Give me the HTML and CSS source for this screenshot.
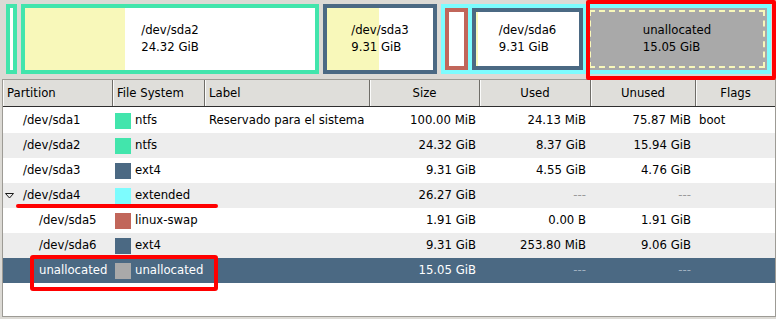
FILE: index.html
```html
<!DOCTYPE html>
<html>
<head>
<meta charset="utf-8">
<title>GParted - /dev/sda</title>
<link rel="stylesheet" href="styles.css">
</head>
<body>

<!-- disk map -->
<div class="map">
  <div class="part ntfs p1"></div>
  <div class="part ntfs p2"><div class="info">/dev/sda2<br>24.32 GiB</div></div>
  <div class="part ext4 p3"><div class="info">/dev/sda3<br>9.31 GiB</div></div>
  <div class="extended">
    <div class="part swap p5"></div>
    <div class="part ext4 p6"><div class="info">/dev/sda6<br>9.31 GiB</div></div>
    <div class="part free"><div class="info">unallocated<br>15.05 GiB</div></div>
  </div>
</div>

<!-- partition list -->
<div class="parts">
  <div class="row head">
    <div class="cell">Partition</div>
    <div class="cell">File System</div>
    <div class="cell">Label</div>
    <div class="cell mid">Size</div>
    <div class="cell mid">Used</div>
    <div class="cell mid">Unused</div>
    <div class="cell mid">Flags</div>
  </div>
  <div class="rows">
    <div class="row">
      <div class="cell name">/dev/sda1</div>
      <div class="cell fs"><span class="swatch c-ntfs"></span>ntfs</div>
      <div class="cell lbl">Reservado para el sistema</div>
      <div class="cell num size">100.00 MiB</div>
      <div class="cell num used">24.13 MiB</div>
      <div class="cell num unused">75.87 MiB</div>
      <div class="cell flags">boot</div>
    </div>
    <div class="row">
      <div class="cell name">/dev/sda2</div>
      <div class="cell fs"><span class="swatch c-ntfs"></span>ntfs</div>
      <div class="cell lbl"></div>
      <div class="cell num size">24.32 GiB</div>
      <div class="cell num used">8.37 GiB</div>
      <div class="cell num unused">15.94 GiB</div>
      <div class="cell flags"></div>
    </div>
    <div class="row">
      <div class="cell name">/dev/sda3</div>
      <div class="cell fs"><span class="swatch c-ext4"></span>ext4</div>
      <div class="cell lbl"></div>
      <div class="cell num size">9.31 GiB</div>
      <div class="cell num used">4.55 GiB</div>
      <div class="cell num unused">4.76 GiB</div>
      <div class="cell flags"></div>
    </div>
    <div class="row">
      <div class="cell name top"><svg class="expander" width="9" height="6" viewBox="0 0 9 6"><polygon points="0.5,0.5 8.5,0.5 4.5,5" fill="none" stroke="#1a1a1a" stroke-width="1"/></svg>/dev/sda4</div>
      <div class="cell fs"><span class="swatch c-ext"></span>extended</div>
      <div class="cell lbl"></div>
      <div class="cell num size">26.27 GiB</div>
      <div class="cell num used dim">---</div>
      <div class="cell num unused dim">---</div>
      <div class="cell flags"></div>
    </div>
    <div class="row">
      <div class="cell name child">/dev/sda5</div>
      <div class="cell fs"><span class="swatch c-swap"></span>linux-swap</div>
      <div class="cell lbl"></div>
      <div class="cell num size">1.91 GiB</div>
      <div class="cell num used">0.00 B</div>
      <div class="cell num unused">1.91 GiB</div>
      <div class="cell flags"></div>
    </div>
    <div class="row">
      <div class="cell name child">/dev/sda6</div>
      <div class="cell fs"><span class="swatch c-ext4"></span>ext4</div>
      <div class="cell lbl"></div>
      <div class="cell num size">9.31 GiB</div>
      <div class="cell num used">253.80 MiB</div>
      <div class="cell num unused">9.06 GiB</div>
      <div class="cell flags"></div>
    </div>
    <div class="row sel">
      <div class="cell name child">unallocated</div>
      <div class="cell fs"><span class="swatch c-free"></span>unallocated</div>
      <div class="cell lbl"></div>
      <div class="cell num size">15.05 GiB</div>
      <div class="cell num used dim">---</div>
      <div class="cell num unused dim">---</div>
      <div class="cell flags"></div>
    </div>
  </div>
</div>

<!-- red marks drawn over the screenshot -->
<div class="mark mark-map"></div>
<div class="mark mark-line"></div>
<div class="mark mark-row"></div>

</body>
</html>
```

FILE: styles.css
```css
body {
	margin: 0;
	background: #dcdad5;
	font-family: "DejaVu Sans", Verdana, sans-serif;
	font-size: 11.7px;
	color: #000;
}

/* disk map */
.map {
	display: flex;
	gap: 4px;
	height: 70px;
	padding: 4px 0 0 6px;
}
.part {
	box-sizing: border-box;
	display: flex;
	align-items: center;
	justify-content: center;
	border: 4px solid #fff;
	background: #fff;
	white-space: nowrap;
	overflow: hidden;
}
.info {
	line-height: 17px;
	text-align: left;
}
.ntfs { border-color: #42e5ac; }
.ext4 { border-color: #4b6983; }
.swap { border-color: #c1665a; }

.p1 { width: 11px; }
.p2 {
	width: 298px;
	background: linear-gradient(to right, #f8f8ba 100px, #fff 100px);
}
.p3 {
	width: 114px;
	background: linear-gradient(to right, #f8f8ba 52px, #fff 52px);
}
.extended {
	display: flex;
	gap: 4px;
	width: 322px;
	border: 4px solid #7dfcfe;
	background: #7dfcfe;
}
.p5 { width: 23px; }
.p6 {
	width: 111px;
	background: linear-gradient(to right, #f8f8ba 2px, #fff 2px);
}
.free {
	width: 180px;
	border: 0;
	background: #a9a9a9;
	outline: 2px dashed #f8f8ba;
	outline-offset: -4px;
}

/* partition list */
.parts {
	height: 236px;
	margin: 5px 0 0 2px;
	border: 1px solid #9d9b95;
	background: #fff;
	overflow: hidden;
}
.row {
	display: grid;
	grid-template-columns: 110px 92px 165px 110px 111px 105px 79px;
	height: 25px;
	line-height: 25px;
}
.head {
	height: 26px;
	line-height: 26px;
	background: #dfdeda;
	border-bottom: 1px solid #2e2e2e;
}
.head .cell {
	padding-left: 4px;
	border-right: 1px solid #6f6d68;
	box-shadow: inset 1px 0 #fbfbfa;
}
.head .cell:last-child { border-right: 0; }
.head .mid {
	padding-left: 0;
	text-align: center;
}
.rows { padding-top: 1px; }
.rows .row:nth-child(even) { background: #ededed; }
.rows .sel,
.rows .sel:nth-child(even) {
	background: #4b6983;
	color: #fff;
}

.cell {
	box-sizing: border-box;
	white-space: nowrap;
	overflow: hidden;
}
.name { padding-left: 20px; }
.name.child { padding-left: 36px; }
.name.top {
	display: flex;
	align-items: center;
	padding-left: 2px;
}
.expander { margin: 0 9px 0 0; }
.fs {
	display: flex;
	align-items: center;
	padding-left: 2px;
}
.swatch {
	width: 16px;
	height: 16px;
	margin-right: 4px;
}
.c-ntfs { background: #42e5ac; }
.c-ext4 { background: #4b6983; }
.c-ext { background: #7dfcfe; }
.c-swap { background: #c1665a; }
.c-free { background: #a9a9a9; }
.lbl { padding-left: 4px; }
.num { text-align: right; }
.size { padding-right: 4px; }
.used { padding-right: 5px; }
.unused { padding-right: 5px; }
.flags { padding-left: 3px; }
.dim { color: #9a9a9a; }
.sel .dim { color: #9fb0c0; }

/* annotations */
.mark {
	position: absolute;
	box-sizing: border-box;
	border: 4px solid #ff0000;
	border-radius: 2px;
}
.mark-map {
	left: 586px;
	top: 0;
	width: 190px;
	height: 80px;
}
.mark-line {
	left: 16px;
	top: 204px;
	width: 202px;
	height: 4px;
	border: 0;
	background: #ff0000;
}
.mark-row {
	left: 30px;
	top: 255px;
	width: 188px;
	height: 36px;
	border-radius: 3px;
}
```
